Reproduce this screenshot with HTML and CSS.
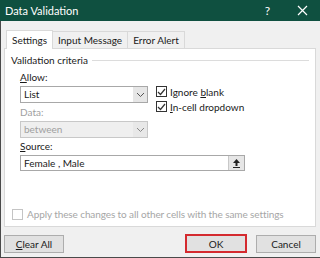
FILE: index.html
```html
<!DOCTYPE html>
<html lang="en">
<head>
    <meta charset="UTF-8">
    <title>Data Validation</title>
    <link rel="stylesheet" href="styles.css">
</head>
<body>
    <div class="dialog">
        <div class="titlebar">
            <span class="title">Data Validation</span>
            <span class="title-btns">
                <span class="help">?</span>
                <svg class="close" width="11" height="11" viewBox="0 0 11 11"><path d="M1 1 L10 10 M10 1 L1 10" stroke="#fff" stroke-width="1.2"/></svg>
            </span>
        </div>
        <div class="content">
            <div class="tabs">
                <div class="tab active">Settings</div>
                <div class="tab">Input Message</div>
                <div class="tab">Error Alert</div>
            </div>
            <div class="panel">
                <div class="group-title"><span>Validation criteria</span><span class="rule"></span></div>
                <div class="criteria">
                    <div class="fields">
                        <div class="label"><u>A</u>llow:</div>
                        <div class="combo">
                            <span class="combo-text">List</span>
                            <span class="combo-arrow"><svg width="9" height="6" viewBox="0 0 9 6"><path d="M1 1 L4.5 4.5 L8 1" fill="none" stroke="#555" stroke-width="1"/></svg></span>
                        </div>
                        <div class="label disabled">Data:</div>
                        <div class="combo off">
                            <span class="combo-text">between</span>
                            <span class="combo-arrow"><svg width="9" height="6" viewBox="0 0 9 6"><path d="M1 1 L4.5 4.5 L8 1" fill="none" stroke="#888" stroke-width="1"/></svg></span>
                        </div>
                    </div>
                    <div class="checks">
                        <div class="check"><span class="box"><svg width="9" height="8" viewBox="0 0 9 8"><path d="M1 4 L3.5 6.5 L8 1" fill="none" stroke="#333" stroke-width="1.2"/></svg></span><span>Ignore <u>b</u>lank</span></div>
                        <div class="check"><span class="box"><svg width="9" height="8" viewBox="0 0 9 8"><path d="M1 4 L3.5 6.5 L8 1" fill="none" stroke="#333" stroke-width="1.2"/></svg></span><span><u>I</u>n-cell dropdown</span></div>
                    </div>
                </div>
                <div class="label source-label"><u>S</u>ource:</div>
                <div class="source">
                    <span class="source-text">Female , Male</span>
                    <span class="source-btn"><svg width="9" height="10" viewBox="0 0 9 10"><path d="M4.5 1 L8 5 L5.5 5 L5.5 8 L3.5 8 L3.5 5 L1 5 Z" fill="#222"/><path d="M1 9.5 H8" stroke="#222" stroke-width="1"/></svg></span>
                </div>
                <div class="apply"><span class="box dim"></span><span>Apply these changes to all other cells with the same settings</span></div>
            </div>
            <div class="buttons">
                <button class="btn"><u>C</u>lear All</button>
                <div class="right-btns">
                    <button class="btn ok">OK</button>
                    <button class="btn">Cancel</button>
                </div>
            </div>
        </div>
    </div>
</body>
</html>
```

FILE: styles.css
```css
body {
    margin: 0;
    width: 320px;
    height: 258px;
    overflow: hidden;
    font-family: Lato, "Noto Sans", sans-serif;
    font-size: 10px;
    color: #1a1a1a;
}
.dialog {
    height: 258px;
    background: #f0f0f0;
    border-left: 1px solid #4a4a4a;
    border-bottom: 1px solid #4a4a4a;
    box-sizing: border-box;
}
.titlebar {
    height: 21px;
    background: #0f5040;
    color: #fff;
    display: flex;
    align-items: center;
    justify-content: space-between;
    padding: 0 12px 0 5px;
    margin-left: -1px;
}
.title {
    font-size: 11px;
}
.title-btns {
    display: flex;
    align-items: center;
    gap: 27px;
}
.help {
    font-size: 12px;
}
.content {
    padding: 10px 4px 0 3px;
}
.tabs {
    display: flex;
    padding-left: 3px;
    height: 17px;
    position: relative;
    z-index: 1;
}
.tab {
    border: 1px solid #d9d9d9;
    border-bottom: none;
    padding: 0 5px;
    line-height: 17px;
    background: #f0f0f0;
    margin-left: -1px;
}
.tab.active {
    background: #fff;
    height: 18px;
    margin-top: -1px;
    line-height: 19px;
}
.panel {
    background: #fff;
    border: 1px solid #d9d9d9;
    height: 179px;
    box-sizing: border-box;
    padding: 4px 6px 0 6px;
}
.group-title {
    display: flex;
    align-items: center;
    gap: 4px;
    height: 14px;
}
.rule {
    flex: 1;
    border-top: 1px solid #dcdcdc;
}
.criteria {
    display: flex;
    gap: 8px;
    padding-left: 9px;
}
.fields {
    width: 128px;
}
.label {
    margin-top: 4px;
    height: 13px;
    line-height: 13px;
}
.label.disabled {
    color: #a0a0a0;
    margin-top: 3px;
}
.source, .panel > .label {
    margin-left: 9px;
}
.label.source-label {
    margin-top: 2px;
}
.combo {
    margin-top: 2px;
    height: 17px;
    border: 1px solid #a8a8a8;
    display: flex;
    box-sizing: border-box;
    background: #fff;
}
.combo-text {
    flex: 1;
    padding-left: 3px;
    line-height: 15px;
}
.combo-arrow {
    width: 14px;
    background: #e6e6e6;
    display: flex;
    align-items: center;
    justify-content: center;
}
.combo.off {
    background: #efefef;
    border-color: #c8c8c8;
    color: #a0a0a0;
}
.combo.off .combo-arrow {
    background: #e8e8e8;
}
.checks {
    padding-top: 19px;
    display: flex;
    flex-direction: column;
    gap: 4px;
}
.check {
    display: flex;
    align-items: center;
    gap: 3px;
    height: 11px;
}
.box {
    width: 9px;
    height: 9px;
    border: 1px solid #333;
    background: #fff;
    display: flex;
    align-items: center;
    justify-content: center;
}
.box.dim {
    border-color: #c4c4c4;
}
.source {
    margin-top: 2px;
    width: 225px;
    height: 16px;
    border: 1px solid #a8a8a8;
    box-sizing: border-box;
    display: flex;
}
.source-text {
    flex: 1;
    padding-left: 3px;
    line-height: 14px;
}
.source-btn {
    width: 15px;
    background: #e6e6e6;
    border-left: 1px solid #c8c8c8;
    display: flex;
    align-items: center;
    justify-content: center;
}
.apply {
    margin-top: 37px;
    display: flex;
    align-items: center;
    gap: 4px;
    color: #a6a6a6;
    margin-left: 1px;
    white-space: nowrap;
    letter-spacing: -0.1px;
}
.buttons {
    display: flex;
    justify-content: space-between;
    margin-top: 8px;
}
.right-btns {
    display: flex;
    gap: 9px;
}
.btn {
    width: 60px;
    height: 18px;
    border: 1px solid #adadad;
    background: #e1e1e1;
    font-family: inherit;
    font-size: 10px;
    color: #1a1a1a;
    padding: 0;
}
.btn.ok {
    border: 2px solid #d42a2f;
    width: 62px;
    height: 19px;
    margin-top: -1px;
}
```
